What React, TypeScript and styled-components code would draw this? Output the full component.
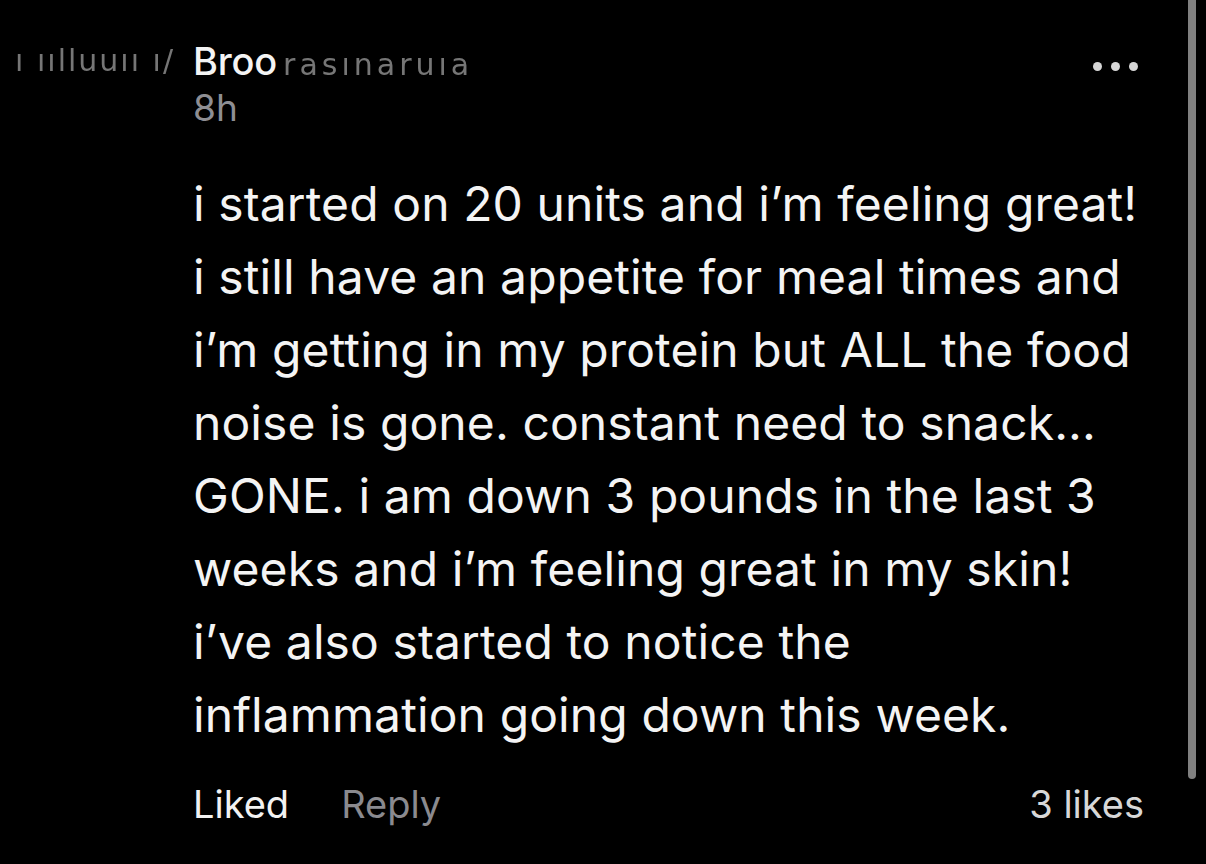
import React from "react";
import styled, { createGlobalStyle } from "styled-components";

const GlobalStyle = createGlobalStyle`
  html, body {
    margin: 0;
    padding: 0;
    background: #000;
  }
  body {
    font-family: Inter, "Noto Sans", "Liberation Sans", sans-serif;
    -webkit-font-smoothing: antialiased;
  }
`;

const lines = [
  "i started on 20 units and i\u2019m feeling great!",
  "i still have an appetite for meal times and",
  "i\u2019m getting in my protein but ALL the food",
  "noise is gone. constant need to snack...",
  "GONE. i am down 3 pounds in the last 3",
  "weeks and i\u2019m feeling great in my skin!",
  "i\u2019ve also started to notice the",
  "inflammation going down this week.",
];

const App = () => {
  return (
    <>
      <GlobalStyle />
      <Screen>
        <Comment>
          <Header>
            <Meta>
              <NameRow>
                <Garble $side="left">ı ıılluuıı ı/</Garble>
                <Name>Broo</Name>
                <Garble $side="right">rasınaruıa</Garble>
              </NameRow>
              <Time>8h</Time>
            </Meta>
            <MoreButton aria-label="more">
              <Dot />
              <Dot />
              <Dot />
            </MoreButton>
          </Header>
          <Body>
            {lines.map((l, i) => (
              <Line key={i}>{l}</Line>
            ))}
          </Body>
          <Footer>
            <Actions>
              <Action $active>Liked</Action>
              <Action>Reply</Action>
            </Actions>
            <Likes>3 likes</Likes>
          </Footer>
        </Comment>
        <Scrollbar />
      </Screen>
    </>
  );
};

const Screen = styled.div`
  position: relative;
  width: 1206px;
  height: 864px;
  background: #000;
  overflow: hidden;
`;
const Comment = styled.div`
  padding: 40px 62px 0 193px;
  display: flex;
  flex-direction: column;
`;
const Header = styled.div`
  display: flex;
  justify-content: space-between;
  align-items: flex-start;
`;
const Meta = styled.div`
  display: flex;
  flex-direction: column;
`;
const NameRow = styled.div`
  position: relative;
  display: flex;
  align-items: baseline;
  height: 44px;
`;
const Name = styled.span`
  font-size: 38px;
  font-weight: 500;
  color: #f4f4f4;
  line-height: 42px;
  letter-spacing: -0.2px;
`;
const Garble = styled.span<{ $side: "left" | "right" }>`
  font-family: "DejaVu Sans", sans-serif;
  font-size: 30px;
  line-height: 42px;
  color: #a8a8a8;
  opacity: 0.7;
  filter: blur(0.7px);
  white-space: nowrap;
  ${(p) =>
    p.$side === "left"
      ? `position: absolute; right: 100%; margin-right: 18px; letter-spacing: 2px;`
      : `margin-left: 6px; letter-spacing: 4px;`}
`;
const Time = styled.span`
  font-size: 37px;
  color: #8e8e93;
  line-height: 48px;
`;
const MoreButton = styled.div`
  display: flex;
  gap: 9px;
  margin-top: 22px;
  margin-right: 6px;
`;
const Dot = styled.span`
  width: 9px;
  height: 9px;
  border-radius: 50%;
  background: #d6d6d6;
`;
const Body = styled.div`
  margin-top: 35px;
  display: flex;
  flex-direction: column;
`;
const Line = styled.div`
  font-size: 48px;
  line-height: 73px;
  color: #f4f4f4;
  white-space: nowrap;
  letter-spacing: 0.1px;
`;
const Footer = styled.div`
  margin-top: 30px;
  display: flex;
  justify-content: space-between;
  align-items: baseline;
`;
const Actions = styled.div`
  display: flex;
  gap: 52px;
`;
const Action = styled.span<{ $active?: boolean }>`
  font-size: 38px;
  color: ${(p) => (p.$active ? "#f2f2f2" : "#8a8a8f")};
`;
const Likes = styled.span`
  font-size: 38px;
  color: #d8d8d8;
`;
const Scrollbar = styled.div`
  position: absolute;
  top: 0;
  right: 10px;
  width: 8px;
  height: 779px;
  border-radius: 0 0 4px 4px;
  background: #808080;
`;

export default App;
